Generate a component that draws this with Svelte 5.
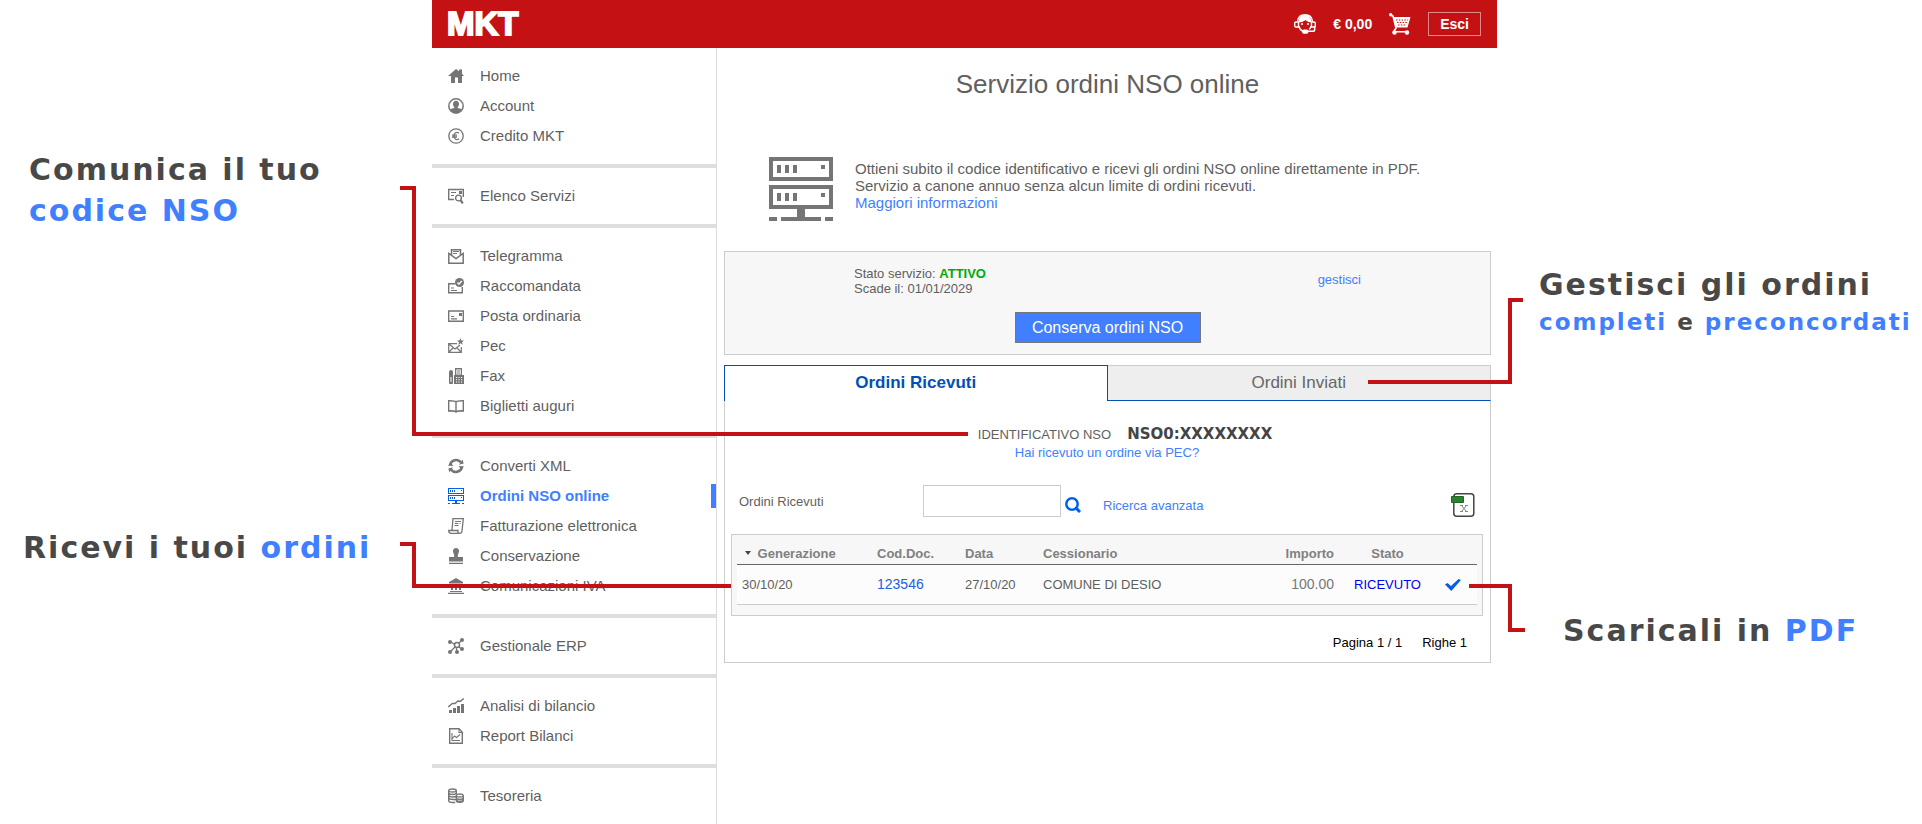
<script lang="ts">
  type MenuItem = { label: string; icon: string; active?: boolean };

  const menu: MenuItem[][] = [
    [
      { label: 'Home', icon: 'home' },
      { label: 'Account', icon: 'account' },
      { label: 'Credito MKT', icon: 'euro' }
    ],
    [{ label: 'Elenco Servizi', icon: 'services' }],
    [
      { label: 'Telegramma', icon: 'telegram' },
      { label: 'Raccomandata', icon: 'registered' },
      { label: 'Posta ordinaria', icon: 'post' },
      { label: 'Pec', icon: 'pec' },
      { label: 'Fax', icon: 'fax' },
      { label: 'Biglietti auguri', icon: 'book' }
    ],
    [
      { label: 'Converti XML', icon: 'convert' },
      { label: 'Ordini NSO online', icon: 'server', active: true },
      { label: 'Fatturazione elettronica', icon: 'invoice' },
      { label: 'Conservazione', icon: 'stamp' },
      { label: 'Comunicazioni IVA', icon: 'bank' }
    ],
    [{ label: 'Gestionale ERP', icon: 'network' }],
    [
      { label: 'Analisi di bilancio', icon: 'chart' },
      { label: 'Report Bilanci', icon: 'report' }
    ],
    [{ label: 'Tesoreria', icon: 'coins' }]
  ];

  // 16x16 glyphs, drawn in currentColor
  const line = 'fill="none" stroke="currentColor"';
  const icons: Record<string, string> = {
    home: `<path d="M8 1 0 8h3v7h4V9.500h3V15h4V8h2l-2-2.200V1.500h-3v1.800z"/>`,
    account: `<circle cx="8" cy="8" r="7.200" ${line} stroke-width="1.500"/><path d="M8 2.800c2 0 3 1.300 3 3.200 0 1.200-.5 2.300-1.300 3v.8c1.500.5 3 1 4 1.800A6.500 6.500 0 0 1 8 15a6.500 6.500 0 0 1-5.700-3.400c1-.8 2.500-1.300 4-1.800V9C5.500 8.300 5 7.200 5 6c0-1.900 1-3.200 3-3.200z"/>`,
    euro: `<circle cx="8" cy="8" r="7.200" ${line} stroke-width="1.300"/><path d="M11 5.200C8.500 3.400 6 5 6 8s2.500 4.600 5 2.800M4 7.200h5M4 9h5" ${line} stroke-width="1.300"/>`,
    services: `<path d="M6 11.500H.7v-10h14.600V9" ${line} stroke-width="1.400"/><path d="M3 4.500h5M3 7.500h3" ${line}/><path d="M11 3h3v3h-3z"/><circle cx="10.500" cy="10" r="2.900" ${line} stroke-width="1.400"/><path d="m12.500 12 2.300 3.300" ${line} stroke-width="2.200"/>`,
    telegram: `<path d="M3.500 7V1.700h9V7M.8 5.500v9.700h14.400V5.500L8 10.500z" ${line} stroke-width="1.500"/><path d="M5 3.500h6M5 5.500h4" ${line}/>`,
    registered: `<path d="M7 5.700H.7v9h13.600V9" ${line} stroke-width="1.400"/><path d="M3 10h3M3 12.500h6" ${line} stroke-width="1.200"/><circle cx="11.500" cy="4.500" r="4.500"/><path d="m9.500 4.500 1.500 1.700L13.700 3" fill="none" stroke="#fff" stroke-width="1.400"/>`,
    post: `<path d="M.7 3h14.600v10.300H.7z" ${line} stroke-width="1.400"/><path d="M3 8.500h3M3 10.800h6" ${line} stroke-width="1.200"/><path d="M11 5h3v3h-3z"/>`,
    pec: `<path d="M9 5.700H.7v8.600h12.600V9M1 6l6 5 5-4M1 14l4.500-4.500M13 14 8.500 9.500" ${line} stroke-width="1.200"/><path d="m12.500 0 .9 2.500h2.600l-2 1.700.8 2.600-2.300-1.500-2.300 1.500.8-2.600L9 2.500h2.600z"/>`,
    fax: `<path d="M1 4q0-2 2-2t2 2v11q0 1-1 1H2q-1 0-1-1zM7 7V0h7v7h2v9H6V7z"/><path d="M2.500 9h1v5h-1zM8.300 1.500h4.500v5H8.300zM8 9h1.200v1H8zm2.400 0h1.200v1h-1.200zM13 9h1.200v1H13zM8 11.300h1.200v1H8zm2.400 0h1.200v1h-1.200zm2.600 0h1.200v1H13zM8 13.600h1.200v1H8zm2.400 0h1.200v1h-1.200zm2.600 0h1.200v1H13z" fill="#fff"/><path d="M9 3h3M9 5h3" ${line}/>`,
    book: `<path d="M8 4C6.500 2.500 3.500 2.700.7 2.700v10C3.500 12.700 6.500 12.500 8 14c1.500-1.500 4.500-1.300 7.300-1.300v-10C12.500 2.700 9.500 2.500 8 4zv10" ${line} stroke-width="1.400"/><path d="M0 13h6.500L8 14l1.500-1H16" ${line}/>`,
    convert: `<path d="M2 7a6.200 6.200 0 0 1 11-2.500M14 9a6.200 6.200 0 0 1-11 2.500" ${line} stroke-width="2.600"/><path d="M15.700 5.500 11 6.800 14.500 1.500zM.3 10.500 5 9.200 1.500 14.500z"/><path d="M0 7.800 5.500 8 2.600 4.500zM16 8.200 10.500 8l2.900 3.500z"/>`,
    server: `<path d="M0 0h16v6H0zM1 1v4h14V1zM0 7h16v6H0zM1 8v4h14V8zM2 2h1v2H2zM4 2h1v2H4zM6 2h1v2H6zM13 2h1v1h-1zM2 9h1v2H2zM4 9h1v2H4zM6 9h1v2H6zM13 9h1v1h-1zM7 13h2v2h3v1H4v-1h3zM0 15h2v1H0zM14 15h2v1h-2z" fill-rule="evenodd" shape-rendering="crispEdges"/>`,
    invoice: `<path d="M4 12 5 .7h10.300L14 13q-.3 2.300-2.500 2.300T10 12.500H.7q0 2.800 2.300 2.800h8.500" ${line} stroke-width="1.300"/><path d="M7 3.500h6M6.800 5.500h3.500M11.500 5.500h1M6.500 7.500h4" ${line}/>`,
    stamp: `<path d="M8 0c2 0 3 1.400 3 3 0 2-1.500 3.500-1.200 6H15v4.500H1V9h5.200C6.500 6.500 5 5 5 3c0-1.600 1-3 3-3zM1 14.700h14V16H1z"/>`,
    bank: `<path d="M8 0 1 4v1.500h14V4zM2 13h12v1H2zM0 14.700h16V16H0zM3 6.500h2V12H3zM7 6.500h2V12H7zM11 6.500h2V12h-2z"/>`,
    network: `<path d="m2 3.500 12 7.500M14 2 2 14M8 8l1 6" ${line} stroke-width="1.300"/><circle cx="9" cy="7" r="2.500" fill="#fff" stroke="currentColor" stroke-width="1.500"/><circle cx="2" cy="4" r="2"/><circle cx="14" cy="2" r="2"/><circle cx="14" cy="11" r="2"/><circle cx="9" cy="14" r="2"/><circle cx="2" cy="14" r="2"/>`,
    chart: `<path d="M1 12h3v3H1zM5 10h3v5H5zM9 8h3v7H9zM13 6h3v9h-3z"/><path d="m.3 9 4-3.500L7 5.500 10 3l2.500.2L15.700.5" ${line} stroke-width="1.400"/>`,
    report: `<path d="M1.700.7H11l3.300 3.500v11.100H1.700z" ${line} stroke-width="1.400"/><path d="M11 1v3.500h3M4 5v7.500h8M4.500 10.500l2-2.500 2 1.500L12 6.500" ${line} stroke-width="1.100"/>`,
    coins: `<path d="M.7 2.500v10q0 2 4 2h2.500M8.300 6V2.500M.7 5q1 1.500 4 1.500t3.600-1.500M.7 7.500Q1.700 9 4.700 9L8 8.500M.7 10q1 1.500 4 1.500H8M8.300 8v4.500q0 1.800 3.500 1.800t3.500-1.800V8M8.300 10q1 1.500 3.500 1.500t3.500-1.500M8.300 12q1 1.500 3.500 1.500t3.500-1.500" ${line} stroke-width="1.400"/><ellipse cx="4.500" cy="2.500" rx="3.800" ry="1.500" ${line} stroke-width="1.300"/><ellipse cx="11.800" cy="7.500" rx="3.500" ry="1.500" ${line} stroke-width="1.300"/>`
  };

  let tab = $state('ricevuti');
  let query = $state('');

  const orders = [
    {
      created: '30/10/20',
      code: '123546',
      date: '27/10/20',
      buyer: 'COMUNE DI DESIO',
      amount: '100.00',
      status: 'RICEVUTO'
    }
  ];
</script>

<div class="page">
  <div class="notes left">
    <p class="note share">Comunica il tuo<br /><b>codice NSO</b></p>
    <p class="note receive">Ricevi i tuoi <b>ordini</b></p>
  </div>

  <div class="app">
    <header>
      <a class="logo" href="/">MKT</a>
      <a class="support" href="/assistenza" aria-label="Assistenza">
        <svg width="22" height="20" viewBox="0 0 22 20">
          <path d="M3.500 7.500C4 3 7 .7 11 .7s7 2.300 7.500 6.800" fill="none" stroke="#fff" stroke-width="1.400" />
          <path d="M4.500 8.500C4.500 3.500 7.500 1 11 1s6.500 2.500 6.500 7.500c-2.500-.3-4.500-.8-6-2.500-1.500 1.500-4 2.500-7 2.500z" fill="#fff" />
          <path d="M4.500 8H2Q.7 8 .7 9.300v2.400Q.7 13 2 13h2.500zM17.500 8H20q1.300 0 1.300 1.300v2.400Q21.300 13 20 13h-2.500z" fill="none" stroke="#fff" stroke-width="1.400" />
          <path d="M4.800 12q1.200 4.500 5 5.500M17.200 12q-.5 2-2 3.500M20.700 12v3.500q0 1.800-2 1.800H14" fill="none" stroke="#fff" stroke-width="1.500" />
          <circle cx="8" cy="10" r="1.100" fill="#fff" />
          <circle cx="14" cy="10" r="1.100" fill="#fff" />
          <rect x="8" y="15.500" width="6.500" height="4.200" rx="2" fill="#fff" />
        </svg>
      </a>
      <span class="credit">€ 0,00</span>
      <a class="cart" href="/carrello" aria-label="Carrello">
        <svg width="22" height="22" viewBox="0 0 22 22">
          <circle cx="1.700" cy="1.800" r="1.700" fill="#fff" />
          <path d="M1.500 2 4 3l3 12-2.300 3.800h13" fill="none" stroke="#fff" stroke-width="1.600" />
          <path d="M4 4h17.500l-3 10.500H7z" fill="#fff" />
          <path d="M7 7h12M8 9.500h10M9 12h8.500" stroke="#c41214" stroke-width="1.200" stroke-dasharray="1.500 1.300" />
          <circle cx="5.500" cy="19.500" r="2.200" fill="#fff" />
          <circle cx="18" cy="19.500" r="2.200" fill="#fff" />
        </svg>
      </a>
      <button class="exit" type="button">Esci</button>
    </header>

    <div class="body">
      <nav>
        {#each menu as group}
          <ul>
            {#each group as item}
              <li class:active={item.active}>
                <a href="#{item.icon}">
                  <svg width="16" height="16" viewBox="0 0 16 16" fill="currentColor">{@html icons[item.icon]}</svg>
                  {item.label}
                </a>
              </li>
            {/each}
          </ul>
        {/each}
      </nav>

      <main>
        <h1>Servizio ordini NSO online</h1>

        <section class="intro">
          <svg width="64" height="64" viewBox="0 0 64 64" fill="#757575">
            <path
              fill-rule="evenodd"
              d="M0 0h64v24H0zM4 4v16h56V4zM0 28h64v24H0zM4 32v16h56V32zM8 8h4v8H8zM16 8h4v8h-4zM24 8h4v8h-4zM52 8h4v4h-4zM8 36h4v8H8zM16 36h4v8h-4zM24 36h4v8h-4zM52 36h4v4h-4zM28 52h8v8h16v4H12v-4h16zM0 60h8v4H0zM56 60h8v4h-8z"
            />
          </svg>
          <p>
            Ottieni subito il codice identificativo e ricevi gli ordini NSO online direttamente in PDF.<br />
            Servizio a canone annuo senza alcun limite di ordini ricevuti.<br />
            <a href="#info">Maggiori informazioni</a>
          </p>
        </section>

        <section class="status">
          <div class="status-row">
            <p>Stato servizio: <strong>ATTIVO</strong><br />Scade il: 01/01/2029</p>
            <a href="#gestisci">gestisci</a>
          </div>
          <button class="primary" type="button">Conserva ordini NSO</button>
        </section>

        <div class="tabs" role="tablist">
          <button type="button" role="tab" aria-selected={tab === 'ricevuti'} onclick={() => (tab = 'ricevuti')}>
            Ordini Ricevuti
          </button>
          <button type="button" role="tab" aria-selected={tab === 'inviati'} onclick={() => (tab = 'inviati')}>
            Ordini Inviati
          </button>
        </div>

        <section class="panel">
          <p class="ident"><span>IDENTIFICATIVO NSO</span><strong>NSO0:XXXXXXXX</strong></p>
          <p class="hint"><a href="#pec">Hai ricevuto un ordine via PEC?</a></p>

          <form class="search">
            <label for="query">Ordini Ricevuti</label>
            <input id="query" type="text" bind:value={query} />
            <button class="find" type="button" aria-label="Cerca">
              <svg width="16" height="16" viewBox="0 0 16 16" fill="none" stroke="#0060e8">
                <circle cx="7" cy="7" r="5.700" stroke-width="2.500" />
                <path d="m10.500 10.500 4.500 4.500" stroke-width="3" />
              </svg>
            </button>
            <a class="advanced" href="#avanzata">Ricerca avanzata</a>
            <button class="export" type="button" aria-label="Esporta in Excel">
              <svg width="24" height="24" viewBox="0 0 24 24">
                <rect x="2.800" y=".8" width="20" height="22.400" rx="3" fill="#fff" stroke="#444" stroke-width="1.500" />
                <path d="M.5 3.500h12v6H.5z" fill="#2e8030" stroke="#1d6a22" />
                <path d="m10.500 12.500 5 6M15.500 12.500l-5 6M9 12.500h3M14 12.500h3M9 18.500h3M14 18.500h3" fill="none" stroke="#888" />
              </svg>
            </button>
          </form>

          <div class="grid">
            <table>
              <thead>
                <tr>
                  <th class="created">
                    <svg width="6" height="4" viewBox="0 0 6 4"><path d="M0 0h6L3 4z" fill="#444" /></svg>
                    Generazione
                  </th>
                  <th class="code">Cod.Doc.</th>
                  <th class="date">Data</th>
                  <th>Cessionario</th>
                  <th class="amount">Importo</th>
                  <th class="state">Stato</th>
                  <th class="done"></th>
                </tr>
              </thead>
              <tbody>
                {#each orders as order}
                  <tr>
                    <td>{order.created}</td>
                    <td class="code"><a href="#{order.code}">{order.code}</a></td>
                    <td>{order.date}</td>
                    <td>{order.buyer}</td>
                    <td class="amount">{order.amount}</td>
                    <td class="state">{order.status}</td>
                    <td class="done">
                      <svg width="16" height="12" viewBox="0 0 16 12">
                        <path d="M0 5.500 2.500 4 6 7 13.500 0 16 1 6.300 12z" fill="#0060e8" />
                      </svg>
                    </td>
                  </tr>
                {/each}
              </tbody>
            </table>
          </div>

          <p class="pager"><span>Pagina 1 / 1</span><span>Righe 1</span></p>
        </section>
      </main>
    </div>
  </div>

  <div class="notes right">
    <p class="note manage">Gestisci gli ordini <small><b>completi</b> e <b>preconcordati</b></small></p>
    <p class="note download">Scaricali in <b>PDF</b></p>
  </div>

  <!-- callout lines, laid over the app -->
  <svg class="lines" fill="none" stroke="#c41116" stroke-width="4" aria-hidden="true">
    <path d="M400 188h14v246h554" />
    <path d="M400 544h14v42h317" />
    <path d="M1523 300h-13v82h-142" />
    <path d="M1469 586h41v44h15" />
  </svg>
</div>

<style>
  :global(body) {
    background: #fff;
  }

  .page {
    position: relative;
    display: grid;
    grid-template-columns: 432px minmax(0, 1fr) 425px;
    min-height: 100vh;
    color: #5f5f5f;
    font-family: 'Liberation Sans', Arial, sans-serif;
    font-size: 13px;
    line-height: 15px;
  }

  p,
  h1,
  ul {
    margin: 0;
    padding: 0;
  }

  a {
    color: #407fff;
    text-decoration: none;
  }

  button {
    font-family: inherit;
    cursor: pointer;
  }

  svg {
    flex: none;
    display: block;
  }

  .notes {
    display: flex;
    flex-direction: column;
    white-space: nowrap;
  }

  .left {
    padding: 149px 0 0 23px;
  }

  .right {
    padding: 264px 0 0 42px;
  }

  .note {
    color: #484848;
    font-family: 'DejaVu Sans', Verdana, sans-serif;
    font-size: 30px;
    font-weight: bold;
    letter-spacing: 2px;
    line-height: 41px;
  }

  .note b {
    color: #407fff;
  }

  .note small {
    display: block;
    font-size: 23px;
    line-height: 34px;
  }

  .share {
    padding-left: 6px;
  }

  .receive {
    margin-top: 296px;
  }

  .download {
    margin: 271px 0 0 24px;
  }

  .lines {
    position: absolute;
    inset: 0;
    width: 100%;
    height: 100%;
    pointer-events: none;
  }

  .app {
    display: flex;
    flex-direction: column;
  }

  header {
    display: flex;
    align-items: center;
    height: 48px;
    padding: 0 16px 0 15px;
    background: #c41214;
    color: #fff;
    font-size: 14px;
    font-weight: bold;
  }

  .logo {
    margin-right: auto;
    color: #fff;
    font-size: 33px;
    line-height: 48px;
    -webkit-text-stroke: 2px #fff;
  }

  .credit {
    margin: 0 17px;
  }

  .exit {
    height: 24px;
    margin-left: 17px;
    padding: 0 11px;
    border: 1px solid #e28a8b;
    background: none;
    color: #fff;
    font-size: 14px;
    font-weight: bold;
  }

  .body {
    display: flex;
    flex: 1;
  }

  nav {
    flex: none;
    width: 284px;
    border-right: 1px solid #dedede;
  }

  nav ul {
    padding: 13px 0;
    list-style: none;
  }

  nav ul + ul {
    border-top: 4px solid #dedede;
  }

  nav li {
    display: flex;
    align-items: center;
    height: 30px;
  }

  nav a {
    display: flex;
    flex: 1;
    align-items: center;
    gap: 16px;
    padding-left: 16px;
    color: #5f5f5f;
    font-size: 15px;
    line-height: 24px;
  }

  nav svg {
    color: #757575;
  }

  nav .active a {
    border-right: 5px solid #407fff;
    color: #407fff;
    font-weight: bold;
  }

  nav .active svg {
    color: #0060e8;
  }

  main {
    flex: 1;
    min-width: 0;
    padding: 21px 6px 0 7px;
  }

  h1 {
    font-size: 26px;
    font-weight: normal;
    line-height: 30px;
    text-align: center;
  }

  .intro {
    display: flex;
    gap: 22px;
    margin-top: 58px;
    padding-left: 45px;
    font-size: 15px;
    line-height: 17px;
  }

  .intro p {
    padding-top: 3px;
  }

  .status {
    margin-top: 30px;
    padding: 14px 0 11px;
    border: 1px solid #ccc;
    background: #f7f7f7;
  }

  .status-row {
    display: flex;
    align-items: center;
    justify-content: space-between;
    padding: 0 129px;
  }

  .status-row a {
    padding-bottom: 4px;
  }

  .status strong {
    color: #00aa08;
  }

  .primary {
    display: block;
    width: 186px;
    height: 31px;
    margin: 16px auto 0;
    padding: 0;
    border: 1px solid #777;
    background: #407fff;
    color: #fff;
    font-size: 16px;
  }

  .tabs {
    display: grid;
    grid-template-columns: 1fr 1fr;
    margin-top: 10px;
  }

  .tabs button {
    height: 36px;
    padding: 0;
    border: 1px solid #ccc;
    border-bottom-color: #0050b8;
    border-left: 0;
    background: #eee;
    color: #666;
    font-size: 17px;
  }

  .tabs button[aria-selected='true'] {
    padding-bottom: 2px;
    border: 1px solid #0050b8;
    border-bottom: 0;
    background: #fff;
    color: #0050b8;
    font-weight: bold;
  }

  .panel {
    padding: 24px 7px 11px 6px;
    border: 1px solid #ccc;
    border-top: 0;
  }

  .ident {
    display: flex;
    align-items: baseline;
    justify-content: center;
    gap: 16px;
    padding-left: 36px;
    line-height: 18px;
  }

  .ident strong {
    color: #444;
    font-family: 'DejaVu Sans', Verdana, sans-serif;
    font-size: 15px;
  }

  .hint {
    line-height: 18px;
    text-align: center;
  }

  .search {
    display: flex;
    align-items: center;
    margin-top: 23px;
    padding: 0 8px;
  }

  .search label {
    width: 184px;
  }

  .search input {
    box-sizing: border-box;
    width: 138px;
    height: 32px;
    padding: 0 6px;
    border: 1px solid #ccc;
    font: inherit;
  }

  .search button {
    padding: 8px 0 0;
    border: 0;
    background: none;
  }

  .find {
    margin: 0 22px 0 4px;
  }

  .advanced {
    padding-top: 8px;
  }

  .export {
    margin-left: auto;
  }

  .grid {
    margin-top: 17px;
    padding: 8px 5px 10px;
    border: 1px solid #ccc;
    background: #f7f7f7;
  }

  table {
    width: 100%;
    border-spacing: 0;
    table-layout: fixed;
  }

  th,
  td {
    padding: 0 5px;
    text-align: left;
  }

  th {
    height: 21px;
    border-bottom: 1px solid #666;
    color: #808080;
  }

  td {
    height: 39px;
    border-bottom: 1px solid #ccc;
    background: #fcfcfc;
  }

  th.created {
    width: 125px;
  }

  th.created svg {
    display: inline-block;
    margin: 0 3px 3px;
  }

  th.code {
    width: 78px;
  }

  td.code,
  td.amount {
    font-size: 14px;
  }

  td.code a {
    color: #2060e0;
  }

  th.date {
    width: 68px;
  }

  .amount {
    width: 90px;
    text-align: right;
  }

  td.amount {
    color: #777;
  }

  .state {
    width: 87px;
    text-align: center;
  }

  td.state {
    color: #0000f0;
  }

  .done {
    width: 27px;
    padding-left: 9px;
  }

  .pager {
    display: flex;
    justify-content: flex-end;
    gap: 20px;
    margin-top: 19px;
    padding-right: 16px;
    color: #000;
    line-height: 16px;
  }
</style>
